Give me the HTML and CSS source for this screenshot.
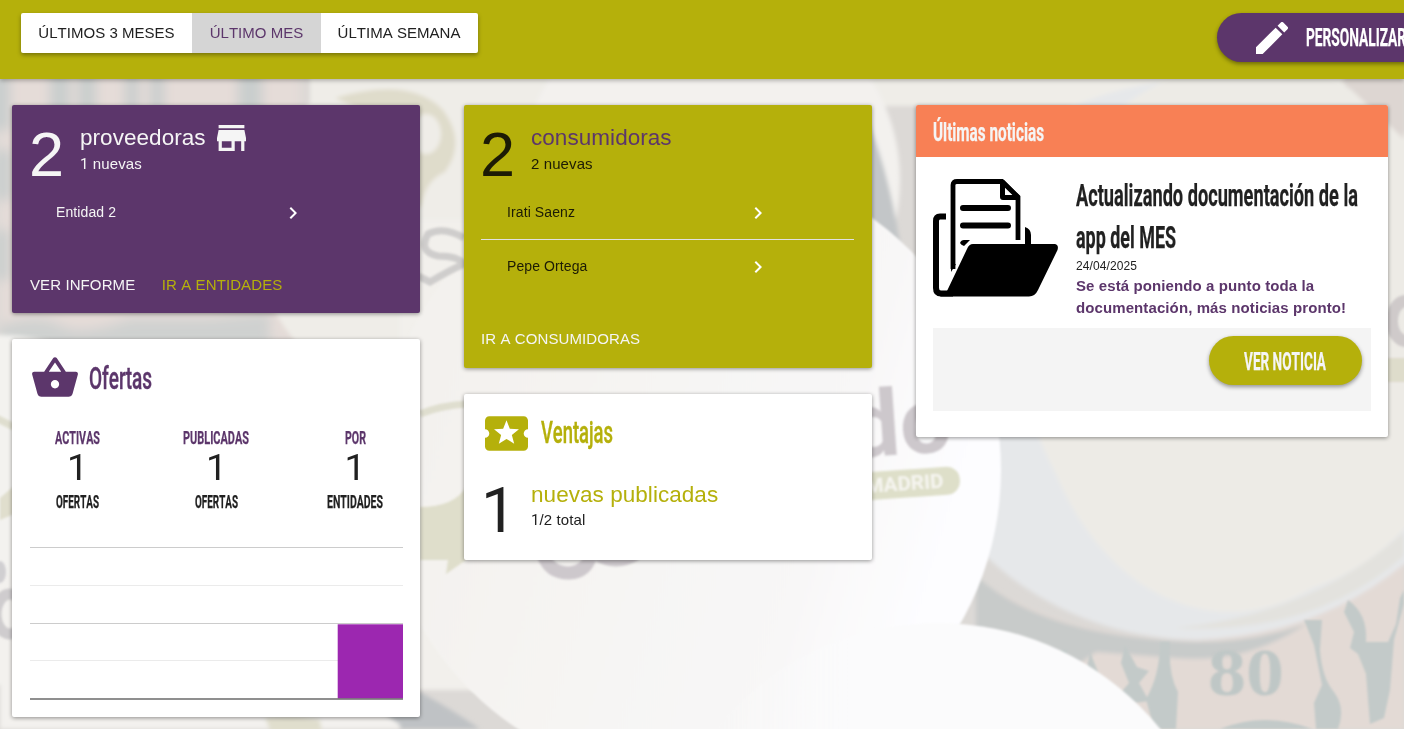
FILE: index.html
```html
<!DOCTYPE html>
<html lang="es">
<head>
<meta charset="utf-8">
<title>Panel</title>
<link rel="stylesheet" href="styles.css">
</head>
<body>
<svg class="backdrop" viewBox="0 0 1404 729" aria-hidden="true">
  <defs>
    <filter id="soft"><feGaussianBlur stdDeviation="2"/></filter>
    <filter id="haze" x="-20%" y="-20%" width="140%" height="140%"><feGaussianBlur stdDeviation="6"/></filter>
    <filter id="fine"><feGaussianBlur stdDeviation="0.9"/></filter>
    <linearGradient id="badge" x1="0" y1="0" x2="1" y2="0.3">
      <stop offset="0" stop-color="#f2f0ec"/><stop offset="0.8" stop-color="#f8f7f7"/><stop offset="1" stop-color="#fdfdff"/>
    </linearGradient>
    <linearGradient id="lower" x1="0" y1="0" x2="1" y2="0">
      <stop offset="0.1" stop-color="#f9f9f9" stop-opacity="0"/><stop offset="0.35" stop-color="#fbfbfc"/>
    </linearGradient>
  </defs>
  <rect width="1404" height="729" fill="#dcd9d6"/>
  <g filter="url(#haze)">
    <path d="M0 70H300V340H0z" fill="#e5dcd8"/>
    <path d="M-10 70h20v60h-20zM50 70h20v60H50zM78 70h18v60H78zM125 70h14v60h-14zM150 70h14v60h-14zM238 70h24v60h-24zM-5 150h16v50H-5zM-5 230h14v50H-5z" fill="#c9cecd"/>
    <path d="M0 325q40-12 60 0t70-6l80 0 60-6v32H0z" fill="#cfd1d0"/>
  </g>
  <g filter="url(#soft)">
    <path d="M310 70H1345V106H310z" fill="#efede8"/>
    <circle cx="430" cy="230" r="175" fill="#efede8"/>
    <path d="M400 220H500V690H400z" fill="#f2f0ec"/>
    <path d="M335 98q75-22 108 12 24 32 2 62-20 8-24 36l-20-20 16-54z" fill="#dfdccb"/>
    <ellipse cx="426" cy="134" rx="15" ry="20" fill="#efede8"/>
    <circle cx="0" cy="510" r="175" fill="#f3f2ef"/>
    <circle cx="710" cy="180" r="190" fill="#f3f1ee"/>
    <path d="M868 120q50 130 40 320h-40z" fill="#c3c6c8"/>
    <ellipse cx="1200" cy="360" rx="300" ry="280" fill="#e6e8ea"/>
    <ellipse cx="1230" cy="340" rx="200" ry="272" fill="#edebe6"/>
    <ellipse cx="1250" cy="330" rx="230" ry="268" fill="#edebe6"/>
    <path d="M1340 79h64v60z" fill="#ddd6d2"/>
    <path d="M1404 532v24q-90 80-230 72 140-14 230-96z" fill="#e3e2de"/>
    <path d="M976 578q90 62 220 62 120-4 208-76v165H1160Q1090 650 976 626z" fill="#e3dad5"/>
    <path d="M976 576q70 62 220 66 60 0 110-18-60 40-130 34l-80-6-20 14q-60-30-100-36z" fill="#c8cbca"/>
  </g>
  <circle cx="690" cy="470" r="311" fill="url(#badge)" filter="url(#fine)"/>
  <g filter="url(#soft)">
    <path d="M420 692q36 20 60 37H360q20-34 60-37z" fill="#bfc2c5"/>
    <path d="M0 575q200 0 400 150v4H0z" fill="#f3f1ee"/>
    <path d="M265 718q30-4 55 2l2 14h-50z" fill="#e0decd"/>
  </g>
  <g filter="url(#fine)" fill="#c3cac9">
    <path d="M1160 642h10q-2 32 8 50l-2 37h-22l-8-30q14-24 14-57zM1125 645l12 22 12 4-10 12 10 18-14 2-18-6 12-14-8-20zM1060 650l8 0-4 8zM1090 652l8 20-4 8-8-8zM1304 620h18l-2 30q2 28 14 42 12 16 4 37h-22l-2-26 8-18q-4-20-8-40z"/>
    <path d="M1348 600q20 14 18 42l22 0 8-18 4-26 4-8v14l-10 36-4 50-6 28-14 6-4-50-8-20-8-6 4-16-10-20z"/>
    <path d="M1220 729q45-18 92 0z"/>
  </g>
  <circle cx="938" cy="909" r="286" fill="url(#lower)" filter="url(#fine)"/>
  <g filter="url(#fine)">
    <path d="M420 414q22-9 48-10" fill="none" stroke="#dfdecf" stroke-width="7"/>
    <path d="M-4 418l18 9" fill="none" stroke="#dfdecf" stroke-width="7"/>
    <path d="M0 498l14-12v28l-14 6z" fill="#e0decd"/>
    <path d="M420 507q34 0 46-20v73l-20 14 2-14h-28z" fill="#dfdecb"/>
    <ellipse cx="0" cy="572" rx="6" ry="11" fill="#d0cfd1"/>
    <ellipse cx="10" cy="614" rx="14" ry="20" fill="none" stroke="#cfccce" stroke-width="11"/>
    <text class="bg-brand" x="850" y="458" transform="rotate(-4 850 458)">do</text>
    <path d="M543 554q6 19 26 19 18-1 22-19M596 554q20 12 40 0" fill="none" stroke="#cdc8cc" stroke-width="13"/>
    <ellipse cx="1406" cy="321" rx="14" ry="20" fill="none" stroke="#cfcaca" stroke-width="12"/>
    <rect x="1380" y="358" width="30" height="24" fill="#dedccb"/>
    <rect x="830" y="470" width="130" height="28" rx="13" fill="#dedfc9" transform="rotate(-4 900 484)"/>
    <text class="bg-city" x="866" y="493" textLength="78" lengthAdjust="spacingAndGlyphs" transform="rotate(-4 866 494)">MADRID</text>
    <path d="M464 238q-20-12-36-4-10 18 10 22 20 0 26 8-14 6-34 18l-12-6" fill="none" stroke="#cfcdcc" stroke-width="7"/>
    <text class="bg-dial" x="1208" y="695" textLength="76" lengthAdjust="spacingAndGlyphs">80</text>
  </g>
</svg>

<header class="topbar">
  <nav class="range">
    <a class="range-item first">ÚLTIMOS 3 MESES</a>
    <a class="range-item active">ÚLTIMO MES</a>
    <a class="range-item last">ÚLTIMA SEMANA</a>
  </nav>
  <a class="pill customize">
    <svg class="pencil" viewBox="3 3 18 18"><path d="M3 17.25V21h3.75L17.81 9.94l-3.75-3.75L3 17.25zM20.71 7.04a.996.996 0 0 0 0-1.41l-2.34-2.34a.996.996 0 0 0-1.41 0l-1.83 1.83 3.75 3.75 1.83-1.83z"/></svg>
    <svg class="gothic" width="102" height="32"><text x="0" y="24" font-size="26.5" textLength="100" lengthAdjust="spacingAndGlyphs">PERSONALIZAR</text></svg>
  </a>
</header>

<main class="board">
  <div class="column">
    <section class="card providers">
      <div class="summary">
        <span class="big">2</span>
        <div>
          <div class="label">proveedoras
            <svg class="store" viewBox="3 4 18 16"><path d="M20 4H4v2h16V4zm1 10v-2l-1-5H4l-1 5v2h1v6h10v-6h4v6h2v-6h1zm-9 4H6v-4h6v4z"/></svg>
          </div>
          <div class="detail"><span class="one">1</span> nuevas</div>
        </div>
      </div>
      <ul class="rows">
        <li class="row"><span>Entidad 2</span><svg class="chevron" viewBox="8 6 8 12"><path d="M10 6L8.59 7.41 13.17 12l-4.58 4.59L10 18l6-6z"/></svg></li>
      </ul>
      <div class="actions"><a>VER INFORME</a><a class="accent">IR A ENTIDADES</a></div>
    </section>

    <section class="card offers">
      <h2 class="heading">
        <svg class="basket" viewBox="0 2 24 20"><path d="M17.21 9l-4.38-6.56a.993.993 0 0 0-1.66.01L6.79 9H2c-.55 0-1 .45-1 1 0 .09.01.18.04.27l2.54 9.27c.23.84 1 1.46 1.92 1.46h13c.92 0 1.69-.62 1.93-1.46l2.54-9.27L23 10c0-.55-.45-1-1-1h-4.79zM9 9l3-4.400L15 9H9zm3 8c-1.100 0-2-.9-2-2s.9-2 2-2 2 .9 2 2-.9 2-2 2z"/></svg>
        <svg class="gothic regular" width="66" height="42"><text x="0" y="32" font-size="32" textLength="63" lengthAdjust="spacingAndGlyphs">Ofertas</text></svg>
      </h2>
      <div class="stats">
        <div class="stat"><svg class="gothic violet" width="46" height="20"><text x="0" y="16" font-size="18" textLength="45" lengthAdjust="spacingAndGlyphs">ACTIVAS</text></svg><span class="num">1</span><svg class="gothic" width="44" height="20"><text x="0" y="16" font-size="18" textLength="43" lengthAdjust="spacingAndGlyphs">OFERTAS</text></svg></div>
        <div class="stat middle"><svg class="gothic violet" width="67" height="20"><text x="0" y="16" font-size="18" textLength="66" lengthAdjust="spacingAndGlyphs">PUBLICADAS</text></svg><span class="num">1</span><svg class="gothic" width="44" height="20"><text x="0" y="16" font-size="18" textLength="43" lengthAdjust="spacingAndGlyphs">OFERTAS</text></svg></div>
        <div class="stat"><svg class="gothic violet" width="21" height="20"><text x="0" y="16" font-size="18" textLength="21" lengthAdjust="spacingAndGlyphs">POR</text></svg><span class="num">1</span><svg class="gothic" width="57" height="20"><text x="0" y="16" font-size="18" textLength="56" lengthAdjust="spacingAndGlyphs">ENTIDADES</text></svg></div>
      </div>
      <svg class="chart" viewBox="0 0 373 154">
        <path d="M0 1.500H373" stroke="#ccc"/>
        <path d="M0 39.500H373" stroke="#ebebeb"/>
        <path d="M0 77.500H373" stroke="#ccc"/>
        <path d="M0 114.500H373" stroke="#ebebeb"/>
        <rect x="307.700" y="78.300" width="65.300" height="74" fill="#9c27b0"/>
        <path d="M0 153H373" stroke="#333" stroke-opacity=".55" stroke-width="2"/>
      </svg>
    </section>
  </div>

  <div class="column">
    <section class="card consumers">
      <div class="summary">
        <span class="big">2</span>
        <div>
          <div class="label violet">consumidoras</div>
          <div class="detail">2 nuevas</div>
        </div>
      </div>
      <ul class="rows">
        <li class="row"><span>Irati Saenz</span><svg class="chevron" viewBox="8 6 8 12"><path d="M10 6L8.590 7.410 13.170 12l-4.580 4.590L10 18l6-6z"/></svg></li>
        <li class="row"><span>Pepe Ortega</span><svg class="chevron" viewBox="8 6 8 12"><path d="M10 6L8.590 7.410 13.170 12l-4.580 4.590L10 18l6-6z"/></svg></li>
      </ul>
      <div class="actions"><a>IR A CONSUMIDORAS</a></div>
    </section>

    <section class="card perks">
      <h2 class="heading">
        <svg class="ticket" viewBox="2 4 20 16"><path d="M20 12c0-1.100.9-2 2-2V6c0-1.100-.9-2-2-2H4c-1.100 0-1.990.9-1.990 2v4c1.100 0 1.990.9 1.990 2s-.89 2-2 2v4c0 1.100.9 2 2 2h16c1.100 0 2-.9 2-2v-4c-1.100 0-2-.9-2-2zm-4.420 4.800L12 14.500l-3.580 2.300 1.080-4.120-3.290-2.690 4.240-.25L12 5.800l1.540 3.950 4.240.25-3.290 2.690 1.090 4.110z"/></svg>
        <svg class="gothic regular" width="76" height="42"><text x="0" y="31" font-size="32" textLength="72" lengthAdjust="spacingAndGlyphs">Ventajas</text></svg>
      </h2>
      <div class="summary">
        <span class="big one">1</span>
        <div>
          <div class="label olive">nuevas publicadas</div>
          <div class="detail"><span class="one">1</span>/2 total</div>
        </div>
      </div>
    </section>
  </div>

  <div class="column wide">
    <section class="card news">
      <h2 class="news-head"><svg class="gothic" width="114" height="36"><text x="0" y="27" font-size="26" textLength="111" lengthAdjust="spacingAndGlyphs">Últimas noticias</text></svg></h2>
      <div class="news-body">
        <div class="article">
          <svg class="folder" viewBox="0 0 125 118">
            <path d="M13 37.500H7Q3 37.500 3 42V109Q3 114.500 8 114.500H20" fill="none" stroke="#000" stroke-width="6"/>
            <path d="M20 90V6Q20 2.500 24 2.500H69L85 18V61" fill="none" stroke="#000" stroke-width="4.800"/>
            <path d="M67 1h4l16 16v4H70q-3 0-3-3zM72 8v8h8z" fill-rule="evenodd"/>
            <path d="M30 29H75M30 46.500H75" stroke="#000" stroke-width="6" stroke-linecap="round"/>
            <path d="M27 64q1-3 4-3h6l-6 6q-3-1-4-3zM92 48q6 2 6 8v10h-6z"/>
            <path d="M40 65H122Q126 66 124.500 71L105 111Q102 117.500 96 117.500H7L14 112 34 70Q36 65 40 65z"/>
            <path d="M18 86v7l5-8z"/>
          </svg>
          <div>
            <h3 class="title">
              <svg class="gothic" width="286" height="42"><text x="0" y="32" font-size="31" textLength="282" lengthAdjust="spacingAndGlyphs">Actualizando documentación de la</text></svg>
              <svg class="gothic" width="286" height="41"><text x="0" y="32" font-size="31" textLength="100" lengthAdjust="spacingAndGlyphs">app del MES</text></svg>
            </h3>
            <div class="date">24/04/2025</div>
            <p class="lead">Se está poniendo a punto toda la documentación, más noticias pronto!</p>
          </div>
        </div>
        <div class="news-foot">
          <a class="pill read"><svg class="gothic" width="84" height="32"><text x="0" y="25" font-size="26.500" textLength="82" lengthAdjust="spacingAndGlyphs">VER NOTICIA</text></svg></a>
        </div>
      </div>
    </section>
  </div>
</main>
</body>
</html>
```

FILE: styles.css
```css
* { box-sizing: border-box; }
body {
  margin: 0;
  width: 1404px;
  height: 729px;
  overflow: hidden;
  font: 15px/1.5 "Liberation Sans", Arial, sans-serif;
  font-kerning: none;
  letter-spacing: .1px;
  color: #212121;
}
h2, h3, p, ul { margin: 0; padding: 0; font-weight: normal; }
svg { display: block; flex: none; fill: currentColor; letter-spacing: 0; }

.backdrop { position: absolute; inset: 0; z-index: -1; width: 1404px; height: 729px; }
.bg-brand { font: bold 92px Roboto, sans-serif; fill: #cdc8cc; }
.bg-city { font: bold 20px Roboto, sans-serif; fill: #f6f5f0; }
.bg-dial { font: bold 68px "Liberation Serif", serif; fill: #bfc7c6; }

.gothic { overflow: visible; }
.gothic text { font-family: Roboto, sans-serif; font-weight: 700; stroke: currentColor; stroke-width: .25px; }
.gothic.regular text { font-weight: 500; stroke-width: .4px; }
.violet { color: #5c366b; }
.olive { color: #b5b00b; }
.one { font-family: Roboto, sans-serif; }

.topbar {
  display: flex;
  justify-content: space-between;
  align-items: flex-start;
  height: 79px;
  padding: 13px 0 0 21px;
  background: #b5b00b;
  box-shadow: 0 2px 4px rgba(0, 0, 0, .25);
}
.range {
  display: flex;
  height: 40px;
  border-radius: 2px;
  overflow: hidden;
  background: #fff;
  line-height: 40px;
  letter-spacing: .03px;
  box-shadow: 0 2px 4px rgba(0, 0, 0, .35);
}
.range-item { text-align: center; white-space: nowrap; }
.first { width: 171px; }
.active { width: 129px; background: #d5d5d5; color: #5c366b; }
.last { width: 157px; padding-right: 1px; }
.pill {
  display: flex;
  align-items: center;
  height: 49px;
  border-radius: 25px;
  box-shadow: 0 2px 4px rgba(0, 0, 0, .4);
}
.customize {
  width: 230px;
  margin-right: -43px;
  padding-left: 39px;
  gap: 18px;
  background: #5c366b;
  color: #fff;
}
.pencil { width: 32px; height: 32px; }

.board { display: flex; gap: 44px; padding: 26px 12px 0; }
.column { display: flex; flex-direction: column; gap: 26px; width: 408px; }
.wide { width: 472px; }
.card {
  border-radius: 2px;
  background: #fff;
  box-shadow: 0 1px 4px rgba(0, 0, 0, .42);
}
.providers { height: 208px; padding: 18px; background: #5c366b; color: #f5f5f5; }
.consumers { height: 263px; padding: 18px 18px 18px 17px; background: #b5b00b; color: #1c1b05; }
.summary { display: flex; gap: 15px; height: 67px; }
.big { width: 35px; margin-left: -1px; margin-right: 1px; font-size: 63px; line-height: 62px; }
.label { display: flex; align-items: center; gap: 11px; height: 29px; font-size: 22.5px; line-height: 29px; letter-spacing: .05px; white-space: nowrap; }
.detail { line-height: 24px; }
.store { width: 29px; height: 26px; }
.rows { list-style: none; font-size: 14px; }
.row { display: flex; height: 54px; padding: 11px 0 0 26px; line-height: 22px; }
.consumers .row { height: 49px; }
.row + .row { border-top: 1px solid #e0e0e0; padding-top: 15px; }
.consumers .row + .row { height: 60px; }
.row span { flex: none; width: 233px; }
.consumers .row span { width: 247px; }
.chevron { width: 8px; height: 12px; margin-top: 6px; color: #fff; }
.actions { display: flex; gap: 26.5px; padding-top: 30px; color: #f5f5f5; }
.consumers .actions { padding-top: 29px; }
.accent { color: #b5b00b; }

.offers { height: 378px; padding: 18px; color: #212121; }
.heading { display: flex; align-items: center; height: 42px; }
.offers .heading { color: #5c366b; gap: 9px; }
.basket { width: 50px; height: 42px; }
.stats { display: flex; justify-content: space-between; height: 98px; margin-top: 29px; padding: 0 19px 0 25px; }
.stat { display: flex; flex-direction: column; align-items: center; }
.stat:first-child { width: 45px; }
.stat:last-child { width: 56px; }
.middle { padding-left: 6px; }
.num { height: 44px; font: 37.5px/38px Roboto, sans-serif; }
.chart { width: 373px; height: 154px; margin-top: 20px; }

.perks { height: 166px; padding: 18px 17px; color: #212121; }
.perks .heading { gap: 13px; padding-left: 4px; color: #b5b00b; }
.perks .summary { margin-top: 26px; }
.perks .big { margin: 0; line-height: 62px; }
.perks .label { height: 28px; }
.perks .detail { line-height: 23px; }
.ticket { width: 43px; height: 35px; }

.news { height: 332px; }
.news-head { display: flex; height: 52px; padding: 9px 17px; border-radius: 2px 2px 0 0; background: #f88055; color: #f5f5f5; }
.news-body { padding: 17px; }
.article { display: flex; gap: 18px; height: 154px; }
.folder { width: 125px; height: 118px; margin-top: 5px; color: #000; }
.date { font-size: 12px; line-height: 18px; }
.lead { width: 290px; font-weight: bold; line-height: 22px; color: #5c366b; }
.news-foot { display: flex; justify-content: flex-end; height: 83px; padding: 8px 9px; background: #f4f4f4; }
.read { width: 153px; padding-left: 35px; background: #b5b00b; color: #f5f5f5; }
```
